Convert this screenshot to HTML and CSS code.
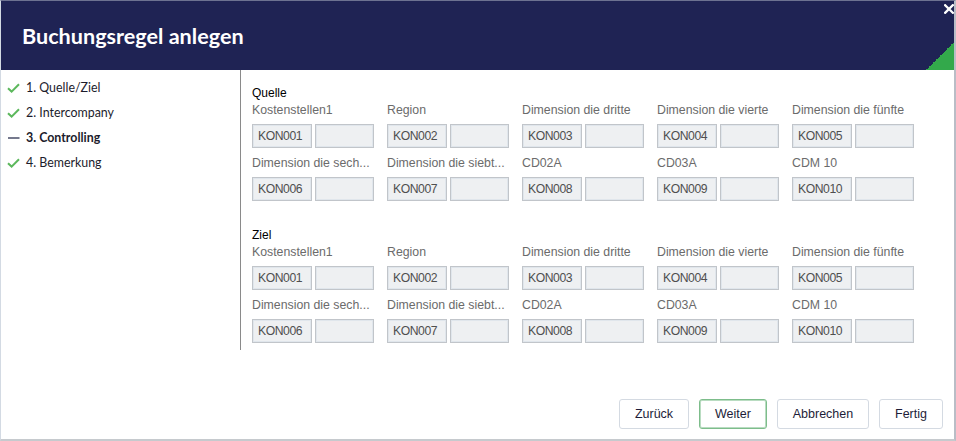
FILE: index.html
```html
<!DOCTYPE html>
<html lang="de">
<head>
<meta charset="utf-8">
<title>Buchungsregel anlegen</title>
<link rel="stylesheet" href="styles.css">
</head>
<body>
<div class="dialog">
  <header class="head">
    <h1 class="title">Buchungsregel anlegen</h1>
    <svg class="close" viewBox="0 0 10 10"><path d="M1.2 1.2 L8.8 8.8 M8.8 1.2 L1.2 8.8" stroke="#fff" stroke-width="2.3" stroke-linecap="square"/></svg>
    <span class="corner"></span>
  </header>
  <div class="main">
    <nav class="steps">
      <div class="step"><svg class="ico" viewBox="0 0 13 10"><path d="M1 5.2 L4.6 8.6 L12 1.2" fill="none" stroke="#5cb85c" stroke-width="2"/></svg><span>1. Quelle/Ziel</span></div>
      <div class="step"><svg class="ico" viewBox="0 0 13 10"><path d="M1 5.2 L4.6 8.6 L12 1.2" fill="none" stroke="#5cb85c" stroke-width="2"/></svg><span>2. Intercompany</span></div>
      <div class="step active"><svg class="ico" viewBox="0 0 13 10"><path d="M1 5 H12.5" fill="none" stroke="#3a3f5c" stroke-width="1.4"/></svg><span>3. Controlling</span></div>
      <div class="step"><svg class="ico" viewBox="0 0 13 10"><path d="M1 5.2 L4.6 8.6 L12 1.2" fill="none" stroke="#5cb85c" stroke-width="2"/></svg><span>4. Bemerkung</span></div>
    </nav>
    <div class="content">
      <section class="group">
        <div class="gtitle">Quelle</div>
        <div class="grid">
          <div class="field"><div class="lbl">Kostenstellen1</div><div class="pair"><span class="inp">KON001</span><span class="inp wide"></span></div></div>
          <div class="field"><div class="lbl">Region</div><div class="pair"><span class="inp">KON002</span><span class="inp wide"></span></div></div>
          <div class="field"><div class="lbl">Dimension die dritte</div><div class="pair"><span class="inp">KON003</span><span class="inp wide"></span></div></div>
          <div class="field"><div class="lbl">Dimension die vierte</div><div class="pair"><span class="inp">KON004</span><span class="inp wide"></span></div></div>
          <div class="field"><div class="lbl">Dimension die fünfte</div><div class="pair"><span class="inp">KON005</span><span class="inp wide"></span></div></div>
          <div class="field"><div class="lbl">Dimension die sech...</div><div class="pair"><span class="inp">KON006</span><span class="inp wide"></span></div></div>
          <div class="field"><div class="lbl">Dimension die siebt...</div><div class="pair"><span class="inp">KON007</span><span class="inp wide"></span></div></div>
          <div class="field"><div class="lbl">CD02A</div><div class="pair"><span class="inp">KON008</span><span class="inp wide"></span></div></div>
          <div class="field"><div class="lbl">CD03A</div><div class="pair"><span class="inp">KON009</span><span class="inp wide"></span></div></div>
          <div class="field"><div class="lbl">CDM 10</div><div class="pair"><span class="inp">KON010</span><span class="inp wide"></span></div></div>
        </div>
      </section>
      <section class="group">
        <div class="gtitle">Ziel</div>
        <div class="grid">
          <div class="field"><div class="lbl">Kostenstellen1</div><div class="pair"><span class="inp">KON001</span><span class="inp wide"></span></div></div>
          <div class="field"><div class="lbl">Region</div><div class="pair"><span class="inp">KON002</span><span class="inp wide"></span></div></div>
          <div class="field"><div class="lbl">Dimension die dritte</div><div class="pair"><span class="inp">KON003</span><span class="inp wide"></span></div></div>
          <div class="field"><div class="lbl">Dimension die vierte</div><div class="pair"><span class="inp">KON004</span><span class="inp wide"></span></div></div>
          <div class="field"><div class="lbl">Dimension die fünfte</div><div class="pair"><span class="inp">KON005</span><span class="inp wide"></span></div></div>
          <div class="field"><div class="lbl">Dimension die sech...</div><div class="pair"><span class="inp">KON006</span><span class="inp wide"></span></div></div>
          <div class="field"><div class="lbl">Dimension die siebt...</div><div class="pair"><span class="inp">KON007</span><span class="inp wide"></span></div></div>
          <div class="field"><div class="lbl">CD02A</div><div class="pair"><span class="inp">KON008</span><span class="inp wide"></span></div></div>
          <div class="field"><div class="lbl">CD03A</div><div class="pair"><span class="inp">KON009</span><span class="inp wide"></span></div></div>
          <div class="field"><div class="lbl">CDM 10</div><div class="pair"><span class="inp">KON010</span><span class="inp wide"></span></div></div>
        </div>
      </section>
    </div>
  </div>
  <footer class="foot">
    <button class="btn">Zurück</button>
    <button class="btn primary">Weiter</button>
    <button class="btn">Abbrechen</button>
    <button class="btn">Fertig</button>
  </footer>
</div>
</body>
</html>
```
FILE: styles.css
```css
* { box-sizing: border-box; }
html, body { margin: 0; padding: 0; background: #ffffff; }
body { width: 956px; height: 441px; overflow: hidden; font-family: "Liberation Sans", Arial, sans-serif; }

.dialog {
  width: 956px;
  height: 441px;
  display: flex;
  flex-direction: column;
  border-top: 1px solid #6d7291;
  border-left: 1px solid #d3dae3;
  border-right: 2px solid #b9bdc6;
  border-bottom: 2px solid #c6cace;
  background: #fff;
}

.head {
  position: relative;
  height: 69px;
  flex: none;
  background: #1f2354;
  display: flex;
  align-items: center;
  padding-left: 21px;
}
.title {
  margin: 0;
  color: #fff;
  font-family: Lato, Inter, sans-serif;
  font-weight: 700;
  font-size: 21.6px;
}
.close {
  position: absolute;
  top: 3px;
  right: 0px;
  width: 10px;
  height: 10px;
}
.corner {
  position: absolute;
  right: 0;
  bottom: 0;
  width: 28px;
  height: 28px;
  background: linear-gradient(to top left, #33a94b 50%, transparent 50%);
}

.main {
  display: flex;
  height: 280px;
  flex: none;
}
.steps {
  width: 240px;
  flex: none;
  border-right: 1px solid #8a8a8a;
  padding: 5px 0 0 6px;
  font-family: Lato, Inter, sans-serif;
  font-size: 12.4px;
  color: #1c1c2c;
}
.step {
  height: 25px;
  display: flex;
  align-items: center;
  gap: 6px;
}
.step.active { font-weight: 700; }
.ico { width: 13px; height: 10px; flex: none; }

.content {
  flex: 1;
  padding: 16px 0 0 11px;
}
.group + .group { margin-top: 27px; }
.gtitle {
  font-size: 12px;
  line-height: 14px;
  color: #000;
}
.grid {
  display: grid;
  grid-template-columns: repeat(5, 122px);
  column-gap: 13px;
  row-gap: 8px;
  margin-top: 3px;
}
.lbl {
  font-size: 12.3px;
  line-height: 14px;
  color: #6b6b6b;
  white-space: nowrap;
  width: 123px;
  margin-bottom: 7px;
}
.pair {
  display: flex;
  gap: 3px;
}
.inp {
  width: 60px;
  height: 24px;
  border: 1px solid #c1c5ca;
  box-shadow: inset 0 0 0 1px #e0e6ec;
  background: #eef0f2;
  color: #4f4f4f;
  font-family: "Liberation Sans", Arial, sans-serif;
  font-size: 12.2px;
  letter-spacing: -0.45px;
  line-height: 22px;
  padding-left: 5px;
}
.inp.wide { width: 59px; }

.foot {
  flex: 1;
  display: flex;
  justify-content: flex-end;
  align-items: flex-end;
  gap: 10px;
  padding: 0 11px 10px 0;
}
.btn {
  height: 30px;
  border: 1px solid #d4dae2;
  border-radius: 3px;
  background: #fff;
  font-family: "Liberation Sans", Arial, sans-serif;
  font-size: 12.5px;
  color: #1d1d38;
  padding: 0;
  width: 70px;
}
.btn.primary { width: 68px; border: 1px solid #7dbd8b; box-shadow: inset 0 0 0 1px #b9dcc1; }
.btn:nth-child(3) { width: 92px; }
.btn:nth-child(4) { width: 64px; }
```
